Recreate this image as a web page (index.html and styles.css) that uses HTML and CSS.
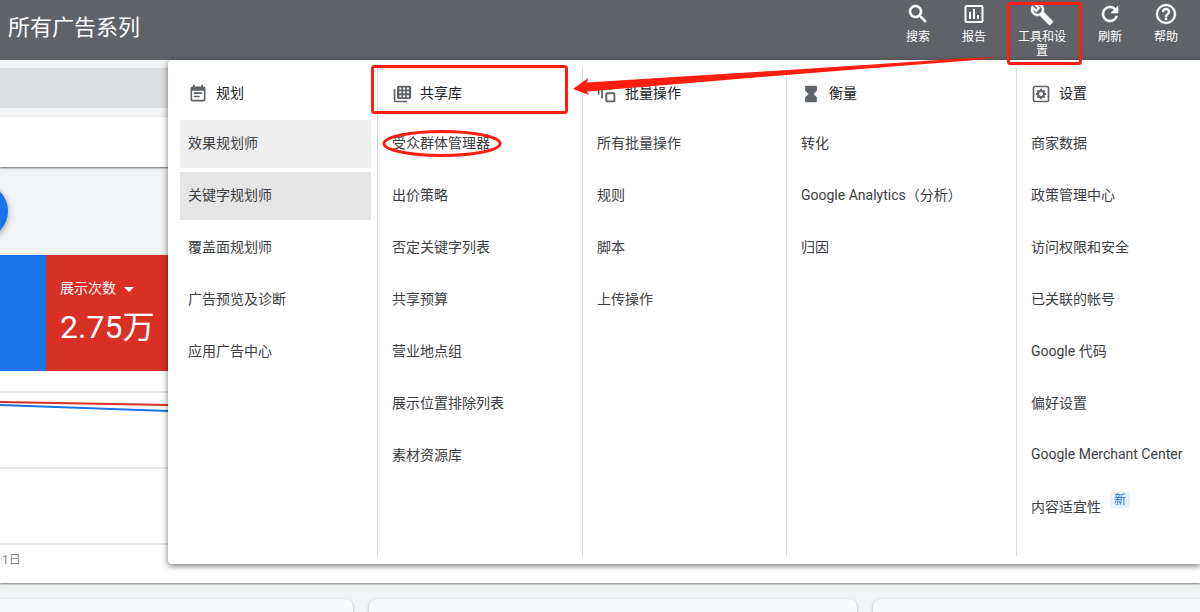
FILE: index.html
```html
<!DOCTYPE html>
<html lang="zh-CN">
<head>
<meta charset="utf-8">
<title>所有广告系列</title>
<link rel="stylesheet" href="styles.css">
</head>
<body>
<header class="topbar">
  <h1 class="topbar-title">所有广告系列</h1>
  <nav class="tools">
    <button class="tool" type="button">
      <svg class="tool-icon" viewBox="0 0 24 24"><path stroke="#fff" stroke-width=".6" d="M15.5 14h-.79l-.28-.27A6.471 6.471 0 0 0 16 9.5 6.5 6.5 0 1 0 9.5 16c1.61 0 3.09-.59 4.23-1.57l.27.28v.79l5 4.99L20.49 19l-4.99-5zm-6 0C7.01 14 5 11.99 5 9.5S7.01 5 9.5 5 14 7.01 14 9.5 11.99 14 9.5 14z"/></svg>
      <span class="tool-label">搜索</span>
    </button>
    <button class="tool" type="button">
      <svg class="tool-icon" viewBox="0 0 24 24"><path d="M9 17H7v-7h2v7zm4 0h-2V7h2v10zm4 0h-2v-4h2v4zm2.5 2.1h-15V5h15v14.1zm0-16.1h-15c-1.1 0-2 .9-2 2v14c0 1.1.9 2 2 2h15c1.1 0 2-.9 2-2V5c0-1.100-.9-2-2-2z"/></svg>
      <span class="tool-label">报告</span>
    </button>
    <button class="tool tool-wide" type="button">
      <svg class="tool-icon" viewBox="0 0 24 24"><path stroke="#fff" stroke-width=".5" d="M22.610 18.990l-9.080-9.080c.93-2.340.45-5.100-1.440-7C9.790.610 6.210.400 3.660 2.260L7.500 6.110 6.080 7.520 2.250 3.690C.390 6.230.600 9.820 2.900 12.110c1.860 1.860 4.570 2.350 6.890 1.480l9.110 9.110c.39.39 1.020.39 1.410 0l2.300-2.300c.4-.38.4-1.010 0-1.410zM10.150 11.130c-.61.45-1.290.72-2 .82-1.360.2-2.790-.21-3.830-1.250C3.370 9.760 2.930 8.500 3 7.260l3.090 3.090 4.240-4.240-3.090-3.090c1.240-.07 2.490.37 3.440 1.310 1.080 1.080 1.490 2.570 1.240 3.960-.12.71-.42 1.370-.88 1.960z"/></svg>
      <span class="tool-label">工具和设置</span>
    </button>
    <button class="tool" type="button">
      <svg class="tool-icon" viewBox="0 0 24 24"><path stroke="#fff" stroke-width=".6" d="M17.650 6.350A7.958 7.958 0 0 0 12 4a8 8 0 1 0 7.730 10h-2.080A5.990 5.990 0 0 1 12 18a6 6 0 1 1 4.220-10.220L13 11h7V4l-2.350 2.350z"/></svg>
      <span class="tool-label">刷新</span>
    </button>
    <button class="tool" type="button">
      <svg class="tool-icon" viewBox="0 0 24 24"><path stroke="#fff" stroke-width=".4" d="M11 18h2v-2h-2v2zm1-16a10 10 0 1 0 0 20 10 10 0 0 0 0-20zm0 18c-4.410 0-8-3.590-8-8s3.590-8 8-8 8 3.590 8 8-3.590 8-8 8zm0-14a4 4 0 0 0-4 4h2c0-1.100.9-2 2-2s2 .9 2 2c0 2-3 1.750-3 5h2c0-2.250 3-2.500 3-5a4 4 0 0 0-4-4z"/></svg>
      <span class="tool-label">帮助</span>
    </button>
  </nav>
</header>

<main class="page">
  <div class="notice"></div>
  <div class="filterbar"></div>
  <div class="stage"><button class="fab" type="button" aria-label="新建"></button></div>
  <section class="chart-card">
    <div class="metrics">
      <div class="metric metric-blue"></div>
      <div class="metric metric-red">
        <button class="metric-name" type="button">展示次数<span class="caret"></span></button>
        <div class="metric-value">2.75万</div>
      </div>
    </div>
    <svg class="chart" viewBox="0 0 1200 174">
      <path d="M0 21H1200M0 97H1200M0 173H1200" stroke="#e6e6e6" stroke-width="2"/>
      <path d="M0 31L168 34" stroke="#d93025" stroke-width="2"/>
      <path d="M0 34L168 40" stroke="#1a73e8" stroke-width="2"/>
    </svg>
    <div class="chart-date">1日</div>
  </section>
  <div class="cards">
    <div class="card card-first"></div>
    <div class="card"></div>
    <div class="card card-last"></div>
  </div>
</main>

<div class="menu">
  <section class="menu-col">
    <h2 class="menu-title"><svg class="menu-icon" viewBox="0 0 24 24"><path d="M17 10H7v2h10v-2zm2-7h-1V1h-2v2H8V1H6v2H5a2 2 0 0 0-2 2v14a2 2 0 0 0 2 2h14a2 2 0 0 0 2-2V5a2 2 0 0 0-2-2zm0 16H5V8h14v11zm-5-5H7v2h7v-2z"/></svg><span class="menu-name">规划</span></h2>
    <a class="menu-item is-hover" href="#">效果规划师</a>
    <a class="menu-item is-active" href="#">关键字规划师</a>
    <a class="menu-item" href="#">覆盖面规划师</a>
    <a class="menu-item" href="#">广告预览及诊断</a>
    <a class="menu-item" href="#">应用广告中心</a>
  </section>
  <section class="menu-col">
    <h2 class="menu-title"><svg class="menu-icon" viewBox="0 0 24 24"><path fill-rule="evenodd" d="M4 6H2v14a2 2 0 0 0 2 2h14v-2H4V6zM8 2h13a2 2 0 0 1 2 2v12a2 2 0 0 1-2 2H8a2 2 0 0 1-2-2V4a2 2 0 0 1 2-2zm.8 2.200v2.400h2.400V4.200zm4.500 0v2.400h2.400V4.200zm4.500 0v2.400h2.400V4.200zM8.800 8.800v2.400h2.400V8.800zm4.500 0v2.400h2.400V8.800zm4.500 0v2.400h2.400V8.800zM8.800 13.400v2.400h2.400v-2.400zm4.500 0v2.400h2.400v-2.400zm4.500 0v2.400h2.400v-2.400z"/></svg><span class="menu-name">共享库</span></h2>
    <a class="menu-item" href="#">受众群体管理器</a>
    <a class="menu-item" href="#">出价策略</a>
    <a class="menu-item" href="#">否定关键字列表</a>
    <a class="menu-item" href="#">共享预算</a>
    <a class="menu-item" href="#">营业地点组</a>
    <a class="menu-item" href="#">展示位置排除列表</a>
    <a class="menu-item" href="#">素材资源库</a>
  </section>
  <section class="menu-col">
    <h2 class="menu-title"><svg class="menu-icon" viewBox="0 0 24 24"><path fill-rule="evenodd" d="M1 1h13v2H3v10H1zM5 5h13v2H7.200v10H5zM12 10h8a2 2 0 0 1 2 2v8a2 2 0 0 1-2 2h-8a2 2 0 0 1-2-2v-8a2 2 0 0 1 2-2zm.3 2.300v7.400h7.400v-7.400z"/></svg><span class="menu-name">批量操作</span></h2>
    <a class="menu-item" href="#">所有批量操作</a>
    <a class="menu-item" href="#">规则</a>
    <a class="menu-item" href="#">脚本</a>
    <a class="menu-item" href="#">上传操作</a>
  </section>
  <section class="menu-col">
    <h2 class="menu-title"><svg class="menu-icon" viewBox="0 0 24 24"><path d="M5 2v6l4 4-4 4v6h14v-6l-4-4 4-4V2z"/></svg><span class="menu-name">衡量</span></h2>
    <a class="menu-item" href="#">转化</a>
    <a class="menu-item" href="#">Google Analytics（分析）</a>
    <a class="menu-item" href="#">归因</a>
  </section>
  <section class="menu-col">
    <h2 class="menu-title"><svg class="menu-icon" viewBox="0 0 24 24"><rect x="3" y="3" width="18" height="18" rx="1.500" fill="none" stroke="#5f6368" stroke-width="2"/><circle cx="12" cy="12" r="3.600" fill="none" stroke="#5f6368" stroke-width="2.600"/><path d="M12 5.800v12.400M5.800 12h12.400M7.600 7.600l8.800 8.800M16.400 7.600l-8.800 8.800" stroke="#5f6368" stroke-width="2.200"/><circle cx="12" cy="12" r="2.400" fill="#fff"/></svg><span class="menu-name">设置</span></h2>
    <a class="menu-item" href="#">商家数据</a>
    <a class="menu-item" href="#">政策管理中心</a>
    <a class="menu-item" href="#">访问权限和安全</a>
    <a class="menu-item" href="#">已关联的帐号</a>
    <a class="menu-item" href="#">Google 代码</a>
    <a class="menu-item" href="#">偏好设置</a>
    <a class="menu-item" href="#">Google Merchant Center</a>
    <a class="menu-item" href="#">内容适宜性<span class="badge">新</span></a>
  </section>
</div>

<svg class="marks" viewBox="0 0 1200 612">
  <g fill="none" stroke="#ff1e12" stroke-width="3">
    <rect x="372.500" y="66.500" width="194" height="46" rx="2"/>
    <rect x="1008.500" y="3.500" width="72" height="60" rx="2"/>
    <ellipse cx="442" cy="143.500" rx="58" ry="12"/>
  </g>
  <path fill="#ff1e12" d="M573 89L588 78L587 82.500L690 76L780 70.500L880 64L960 58.500L1000 57L970 60.500L880 67.500L780 75.500L690 83L587 91.500L589 95Z"/>
</svg>
</body>
</html>
```
FILE: styles.css
```css
* { box-sizing: border-box; }

body {
  margin: 0;
  height: 100vh;
  overflow: hidden;
  position: relative;
  display: flex;
  flex-direction: column;
  background: #f1f3f4;
  color: #3c4043;
  font-family: Roboto, "Noto Sans CJK SC", sans-serif;
  font-size: 14px;
}

button {
  border: 0;
  padding: 0;
  background: none;
  color: inherit;
  font: inherit;
  cursor: pointer;
}

/* Top bar */
.topbar {
  flex: none;
  min-height: 60px;
  display: flex;
  justify-content: space-between;
  padding: 0 6px 0 8px;
  background: #5f6368;
  color: #fff;
}

.topbar-title {
  margin: 0;
  font-size: 22px;
  font-weight: 400;
  line-height: 56px;
}

.tools { display: flex; }

.tool {
  width: 56px;
  display: flex;
  flex-direction: column;
  align-items: center;
  gap: 4px;
  padding-top: 2px;
}

.tool-wide { width: 80px; }

.tool-icon {
  flex: none;
  width: 24px;
  height: 24px;
  fill: #fff;
}

.tool-label {
  max-width: 52px;
  font-size: 12px;
  line-height: 14px;
}

/* Page behind the menu */
.page {
  flex: 1;
  display: flex;
  flex-direction: column;
  padding-top: 8px;
}

.notice {
  flex: none;
  height: 40px;
  background: #dadce0;
}

.filterbar {
  flex: none;
  height: 50px;
  margin-top: 9px;
  background: #fff;
  box-shadow: 0 1px 2px rgba(0, 0, 0, 0.6);
}

.stage {
  flex: none;
  padding: 16px 0;
}

.fab {
  display: block;
  width: 56px;
  height: 56px;
  margin-left: -48px;
  border-radius: 50%;
  background: #1a73e8;
  box-shadow: 0 2px 6px rgba(0, 0, 0, 0.35);
}

.chart-card {
  flex: none;
  padding-bottom: 13px;
  background: #fff;
  box-shadow: 0 1px 2px rgba(0, 0, 0, 0.5);
}

.metrics {
  display: flex;
  min-height: 116px;
}

.metric-blue {
  width: 46px;
  background: #1a73e8;
}

.metric-red {
  width: 184px;
  padding: 22px 14px 0;
  background: #d93025;
  color: #fff;
}

.metric-name {
  display: flex;
  align-items: center;
  gap: 8px;
  line-height: 22px;
}

.caret {
  margin-top: 2px;
  border: 5px solid transparent;
  border-top-color: #fff;
  border-bottom: 0;
}

.metric-value {
  font-size: 32px;
  line-height: 56px;
}

.chart {
  display: block;
  width: 100%;
  fill: none;
}

.chart-date {
  padding: 6px 2px 0;
  color: #80868b;
  font-size: 12px;
  line-height: 19px;
}

.cards {
  flex: 1;
  display: grid;
  grid-template-columns: 353fr 488fr 327fr;
  gap: 16px;
  padding-top: 16px;
}

.card {
  border-radius: 8px 8px 0 0;
  background: #f8f9fa;
  box-shadow: 0 1px 3px rgba(60, 64, 67, 0.4);
}

.card-first { border-top-left-radius: 0; }
.card-last { border-top-right-radius: 0; }

/* Tools menu */
.menu {
  position: absolute;
  top: 60px;
  left: 168px;
  right: 0;
  display: grid;
  grid-template-columns: 204fr 205fr 204fr 230fr 183fr;
  padding: 8px 0 8px 6px;
  border-radius: 4px 0 0 4px;
  background: #fff;
  box-shadow: 0 2px 6px rgba(0, 0, 0, 0.55);
}

.menu-col {
  display: flex;
  flex-direction: column;
  gap: 4px;
  padding: 0 6px 24px;
  border-right: 1px solid #dadce0;
}

.menu-col:last-child {
  padding-right: 0;
  border-right: 0;
}

.menu-title {
  display: flex;
  align-items: center;
  gap: 8px;
  height: 48px;
  margin: 0;
  padding: 4px 8px 0;
  color: #202124;
  font-size: 14px;
  font-weight: 400;
}

.menu-name { padding-bottom: 4px; }

.menu-icon {
  width: 20px;
  height: 20px;
  fill: #5f6368;
}

.menu-item {
  display: flex;
  align-items: center;
  gap: 9px;
  height: 48px;
  padding: 0 8px 4px;
  color: #3c4043;
  text-decoration: none;
  white-space: nowrap;
}

.is-hover { background: #eee; }
.is-active { background: #e6e6e6; }

.badge {
  align-self: flex-start;
  margin-top: 8px;
  padding: 0 4px;
  border-radius: 2px;
  background: #e8f0fe;
  color: #1a73e8;
  font-size: 12px;
  line-height: 16px;
}

/* Hand-drawn highlights over the page */
.marks {
  position: absolute;
  top: 0;
  left: 0;
  width: 1200px;
  height: 612px;
  pointer-events: none;
}
```
